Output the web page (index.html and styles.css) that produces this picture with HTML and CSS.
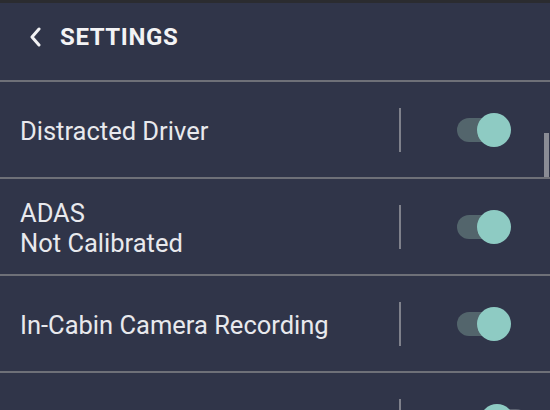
FILE: index.html
```html
<!DOCTYPE html>
<html lang="en">
<head>
  <meta charset="UTF-8">
  <title>Settings</title>
  <link rel="stylesheet" href="styles.css">
</head>
<body>
  <div class="screen">
    <!-- header -->
    <div class="header">
      <svg class="back" width="12" height="20" viewBox="0 0 12 20">
        <path d="M10 2 L3 10 L10 18" fill="none" stroke="#f2f2f4" stroke-width="3" stroke-linecap="round" stroke-linejoin="round"/>
      </svg>
      <span class="title">SETTINGS</span>
    </div>

    <!-- settings list -->
    <div class="list">
      <div class="row">
        <div class="label">Distracted Driver</div>
        <div class="sep"></div>
        <div class="toggle on"><span class="track"></span><span class="thumb"></span></div>
      </div>
      <div class="row">
        <div class="label">ADAS<br>Not Calibrated</div>
        <div class="sep"></div>
        <div class="toggle on"><span class="track"></span><span class="thumb"></span></div>
      </div>
      <div class="row">
        <div class="label">In-Cabin Camera Recording</div>
        <div class="sep"></div>
        <div class="toggle on"><span class="track"></span><span class="thumb"></span></div>
      </div>
      <div class="row">
        <div class="label">Driver Seatbelt Violation</div>
        <div class="sep"></div>
        <div class="toggle off"><span class="track"></span><span class="thumb"></span></div>
      </div>
      <div class="scrollbar"></div>
    </div>
  </div>
</body>
</html>
```

FILE: styles.css
```css
html, body { margin: 0; padding: 0; }
body { background: #303549; font-family: Roboto, "Liberation Sans", sans-serif; color: #e8e9ed; overflow: hidden; }
.screen { width: 550px; height: 410px; border-top: 3px solid #2b2c30; box-sizing: border-box; }

.header { height: 77px; display: flex; align-items: center; padding-left: 29px; gap: 19px; border-bottom: 2px solid #6e7078; box-sizing: content-box; }
.back { margin-top: -9px; }
.title { font-size: 24px; font-weight: 700; letter-spacing: 0.6px; color: #f3f3f5; margin-top: -9px; }

.list { position: relative; }
.row { height: 95px; display: flex; align-items: center; padding: 0 39px 0 20px; border-bottom: 2px solid #6e7078; }
.label { flex: 1; font-size: 25.5px; line-height: 30px; margin-top: 2px; }
.sep { width: 2px; height: 44px; background: #7f818b; margin-right: 56px; }

.toggle { position: relative; width: 54px; height: 34px; }
.toggle .track { position: absolute; left: 0; top: 5px; width: 48px; height: 24px; border-radius: 12px; background: #53656c; }
.toggle .thumb { position: absolute; right: 0; top: 0; width: 34px; height: 34px; border-radius: 50%; background: #8ecbc3; }
.toggle.off .track { left: 29px; width: 42px; background: #5b6170; }
.toggle.off .thumb { right: auto; left: 23px; }

.scrollbar { position: absolute; right: 1px; top: 51px; width: 5px; height: 44px; background: #8a8c95; }
```
